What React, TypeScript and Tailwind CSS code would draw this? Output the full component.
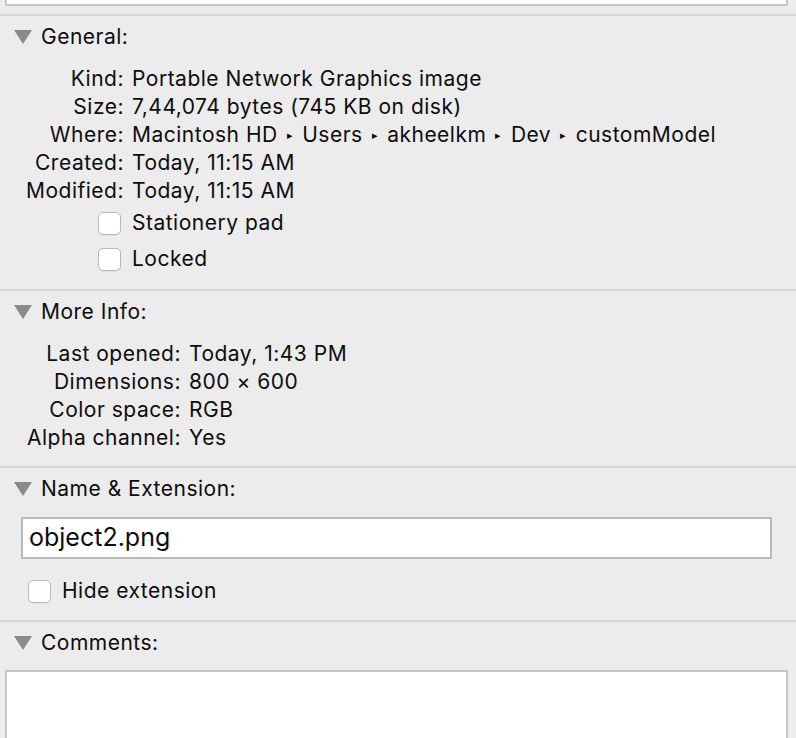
import React from 'react';

const Triangle = () => (
  <svg width="18" height="14" viewBox="0 0 18 14" className="shrink-0">
    <path d="M0 0 H18 L9 14 Z" fill="#8a8a8a" />
  </svg>
);

const Checkbox = () => (
  <span className="inline-block h-[23px] w-[23px] shrink-0 rounded-[5px] border border-[#b8b8b8] bg-white shadow-[0_0.5px_0.5px_rgba(0,0,0,0.08)]" />
);

const Section = ({ title, children, pb }: { title: string; children?: React.ReactNode; pb: string }) => (
  <section className={`border-t-2 border-[#d6d6d6] pt-[7px] ${pb}`}>
    <div className="flex h-[28px] items-center pl-[14px]">
      <Triangle />
      <span className="ml-[9px]">{title}</span>
    </div>
    {children}
  </section>
);

const Row = ({ label, wide, children }: { label: string; wide?: boolean; children: React.ReactNode }) => (
  <div className="flex h-[28px] items-center whitespace-nowrap">
    <span className={wide ? 'w-[181px] text-right' : 'w-[124px] text-right'}>{label}</span>
    <span className="ml-[8px] flex items-center">{children}</span>
  </div>
);

const Arrow = () => <span className="mx-[9px] inline-block text-[11px]">▸</span>;

export default function App() {
  return (
    <div
      className="h-[738px] w-[796px] overflow-hidden bg-[#ececec] text-[21px] tracking-[0.5px] text-[#0d0d0d]"
      style={{ fontFamily: 'Inter, "Liberation Sans", Arial, sans-serif' }}
    >
      <div className="mx-[5px] h-[6px] w-[783px] border-x-2 border-b-2 border-[#c6c6c6] bg-white" />
      <div className="h-[8px]" />

      <Section title="General:" pb="pb-[12px]">
        <div className="mt-[14px]">
          <Row label="Kind:">Portable Network Graphics image</Row>
          <Row label="Size:">7,44,074 bytes (745 KB on disk)</Row>
          <Row label="Where:">
            Macintosh HD<Arrow />Users<Arrow />akheelkm<Arrow />Dev<Arrow />customModel
          </Row>
          <Row label="Created:">Today, 11:15 AM</Row>
          <Row label="Modified:">Today, 11:15 AM</Row>
        </div>
        <div className="pl-[98px]">
          <label className="flex h-[36px] items-center gap-[11px]">
            <Checkbox />
            <span>Stationery pad</span>
          </label>
          <label className="flex h-[36px] items-center gap-[11px]">
            <Checkbox />
            <span>Locked</span>
          </label>
        </div>
      </Section>

      <Section title="More Info:" pb="pb-[14px]">
        <div className="mt-[14px]">
          <Row label="Last opened:" wide>Today, 1:43 PM</Row>
          <Row label="Dimensions:" wide>800 × 600</Row>
          <Row label="Color space:" wide>RGB</Row>
          <Row label="Alpha channel:" wide>Yes</Row>
        </div>
      </Section>

      <Section title="Name & Extension:" pb="pb-[11px]">
        <div className="ml-[21px] mt-[14px] flex h-[42px] w-[751px] items-center border-2 border-[#b9b9b9] bg-white pl-[6px] text-[25px] tracking-normal">
          object2.png
        </div>
        <label className="mt-[14px] flex h-[36px] items-center gap-[11px] pl-[28px]">
          <Checkbox />
          <span>Hide extension</span>
        </label>
      </Section>

      <Section title="Comments:" pb="pb-0">
        <div className="ml-[5px] mt-[13px] h-[120px] w-[783px] border-2 border-[#c6c6c6] bg-white" />
      </Section>
    </div>
  );
}
